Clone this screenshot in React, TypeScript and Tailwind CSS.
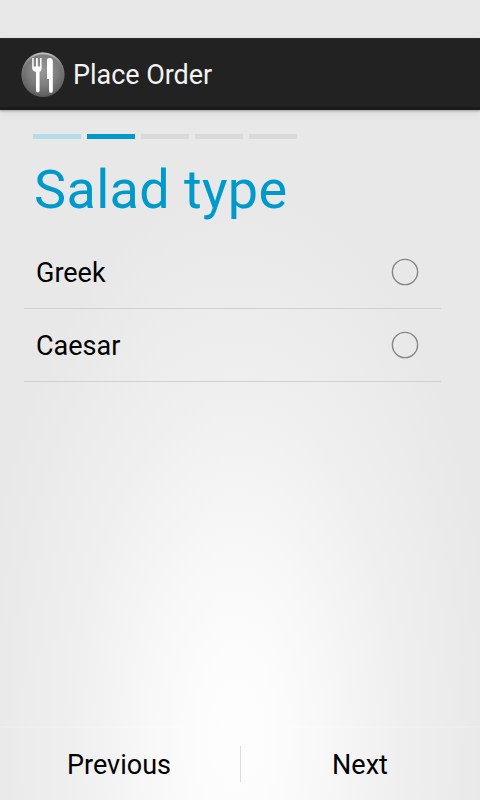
const steps = ['bg-[#b5dce8]', 'bg-[#0099cc]', 'bg-[#d9d9d9]', 'bg-[#d9d9d9]', 'bg-[#d9d9d9]'];

function AppIcon() {
  return (
    <svg width="44" height="46" viewBox="0 0 44 46" className="shrink-0">
      <defs>
        <radialGradient id="disc" cx="0.5" cy="0.4" r="0.62">
          <stop offset="0" stopColor="#989898" />
          <stop offset="0.55" stopColor="#7d7d7d" />
          <stop offset="1" stopColor="#5a5a5a" />
        </radialGradient>
        <linearGradient id="rim" x1="0" y1="0" x2="0" y2="1">
          <stop offset="0" stopColor="#bdbdbd" />
          <stop offset="0.3" stopColor="#8a8a8a" stopOpacity="0.4" />
          <stop offset="1" stopColor="#555" stopOpacity="0.2" />
        </linearGradient>
      </defs>
      <ellipse cx="22" cy="22.6" rx="21.5" ry="22.4" fill="url(#disc)" />
      <ellipse cx="22" cy="22.8" rx="20.6" ry="21.4" fill="none" stroke="url(#rim)" strokeWidth="2" />
      <path
        d="M11.2 6h1.5v8.4h2.3V6h1.8v8.4h2.3V6h1.5v10.4c0 2-.9 3-2 3.4V38.7a1.8 1.8 0 0 1-3.6 0V19.8c-1.9-.4-3.8-1.4-3.8-3.4z"
        fill="#fff"
      />
      <path d="M26 8.4c0-1.6 1-2.4 2.8-2.4s3 1.1 3 3v29.9a1.9 1.9 0 0 1-3.8 0V27H26z" fill="#fff" />
    </svg>
  );
}

function Option({ label }: { label: string }) {
  return (
    <label className="flex h-[73px] items-center justify-between border-b border-[#d0d0d0] pr-[22px] pl-3 text-[27px] text-black">
      <span className="pt-0.5">{label}</span>
      <svg width="28" height="28" viewBox="0 0 28 28" fill="none">
        <circle cx="14" cy="14" r="12.6" stroke="#858585" strokeWidth="1.4" />
      </svg>
    </label>
  );
}

export default function App() {
  return (
    <div className="flex h-[800px] w-[480px] flex-col overflow-hidden bg-[#e8e8e8] bg-[radial-gradient(ellipse_262px_545px_at_236px_735px,#fdfdfd_0%,#fcfcfc_14%,#f8f8f8_32%,#efefef_63%,#e8e8e8_100%)] font-[Roboto,sans-serif]">
      <div className="h-[38px] shrink-0 bg-[#e8e8e8]" />
      <header className="flex h-[72px] shrink-0 items-center gap-2 border-t border-b-[3px] border-t-[#2b2b2b] border-b-[#1a1a1a] bg-[#222] pt-[3px] pl-[21px] shadow-[0_1px_2px_rgba(0,0,0,0.28),0_3px_9px_rgba(0,0,0,0.07)]">
        <AppIcon />
        <h1 className="pt-px text-[27px] leading-none tracking-[-0.05px] text-[#f3f3f3]">Place Order</h1>
      </header>
      <main className="flex-1 pt-6">
        <div className="flex gap-1.5 pl-[33px]">
          {steps.map((color, i) => (
            <div key={i} className={`h-[5px] w-12 ${color}`} />
          ))}
        </div>
        <h2 className="mt-[19px] h-[78px] pl-[34px] text-[54px] leading-[64px] tracking-[0.35px] text-[#0099cc]">Salad type</h2>
        <div className="mr-[39px] ml-6">
          <Option label="Greek" />
          <Option label="Caesar" />
        </div>
      </main>
      <footer className="flex h-[74px] items-center border-t-2 border-white/20 text-[27px] text-black">
        <button className="flex-1 pt-[3px] pr-0.5 text-center">Previous</button>
        <span className="h-9 w-px bg-[#dcdcdc]" />
        <button className="flex-1 pt-[3px] pr-px text-center">Next</button>
      </footer>
    </div>
  );
}
